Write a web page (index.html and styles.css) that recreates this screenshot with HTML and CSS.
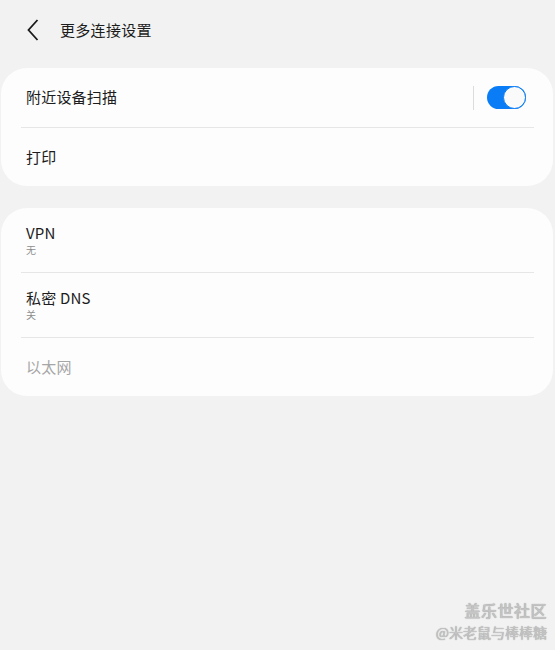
FILE: index.html
```html
<!DOCTYPE html>
<html lang="zh">
<head>
<meta charset="utf-8">
<link rel="stylesheet" href="styles.css">
</head>
<body>
<div class="page">
  <header class="header">
    <svg class="back" width="12" height="22" viewBox="0 0 12 22"><path d="M10.5 1 L1.5 11 L10.5 21" fill="none" stroke="#1a1a1a" stroke-width="1.8"/></svg>
    <span class="title">更多连接设置</span>
  </header>
  <section class="card card1">
    <div class="row row-a">
      <span class="label">附近设备扫描</span>
      <div class="ctrl">
        <span class="vline"></span>
        <span class="toggle"><span class="knob"></span></span>
      </div>
    </div>
    <div class="divider"></div>
    <div class="row row-b"><span class="label">打印</span></div>
  </section>
  <section class="card card2">
    <div class="row row-c">
      <div class="stack"><span class="label">VPN</span><span class="sub">无</span></div>
    </div>
    <div class="divider"></div>
    <div class="row row-c">
      <div class="stack"><span class="label">私密 DNS</span><span class="sub">关</span></div>
    </div>
    <div class="divider"></div>
    <div class="row row-b"><span class="label dim">以太网</span></div>
  </section>
  <div class="watermark">
    <span class="wm1">盖乐世社区</span>
    <span class="wm2">@米老鼠与棒棒糖</span>
  </div>
</div>
</body>
</html>
```
FILE: styles.css
```css
html, body { margin: 0; padding: 0; }
body {
  background: #f2f2f2;
  font-family: "Noto Sans CJK SC", "Noto Sans", sans-serif;
  color: #1c1c1c;
  width: 555px;
  height: 650px;
  overflow: hidden;
}
.page { position: relative; height: 650px; }
.header {
  height: 68px;
  display: flex;
  align-items: center;
  padding-left: 27px;
  box-sizing: border-box;
  padding-bottom: 10px;
}
.back { display: block; margin-top: 2px; }
.title { font-size: 15px; margin-left: 21px; letter-spacing: 0.3px; }
.card {
  background: #fdfdfd;
  border-radius: 26px;
  margin: 0 2px 0 1px;
}
.card2 { margin-top: 22px; }
.row {
  display: flex;
  align-items: center;
  justify-content: space-between;
  padding-left: 25px;
  padding-right: 27px;
}
.row-a { height: 59px; }
.row-b { height: 58px; }
.row-c { height: 64px; }
.label { font-size: 15px; letter-spacing: 0.2px; margin-top: -2px; }
.dim { color: #a6a6a6; }
.stack { display: flex; flex-direction: column; margin-top: 0; }
.stack .label { line-height: 20px; margin-top: 0; }
.sub { font-size: 10px; color: #8e8e8e; line-height: 14px; }
.divider { height: 1px; background: #e6e6e6; margin: 0 19px 0 20px; }
.ctrl { display: flex; align-items: center; }
.vline { width: 1px; height: 24px; background: #dcdcdc; margin-right: 13px; }
.toggle {
  width: 39px; height: 23px;
  border-radius: 12px;
  background: #0a7cf6;
  position: relative;
  box-sizing: border-box;
}
.knob {
  position: absolute;
  right: 0; top: 0;
  width: 23px; height: 23px;
  border-radius: 50%;
  background: #fafafa;
  border: 1.5px solid #0a7cf6;
  box-sizing: border-box;
}
.watermark {
  position: absolute;
  right: 8px;
  top: 599px;
  display: flex;
  flex-direction: column;
  align-items: flex-end;
  text-shadow: 0 0 1px #8a8a8a;
}
.wm1 { font-size: 16px; line-height: 23px; font-weight: 500; letter-spacing: 0.5px; color: #c4c4c4; }
.wm2 { font-size: 14px; line-height: 20px; color: #c4c4c4; }
```
